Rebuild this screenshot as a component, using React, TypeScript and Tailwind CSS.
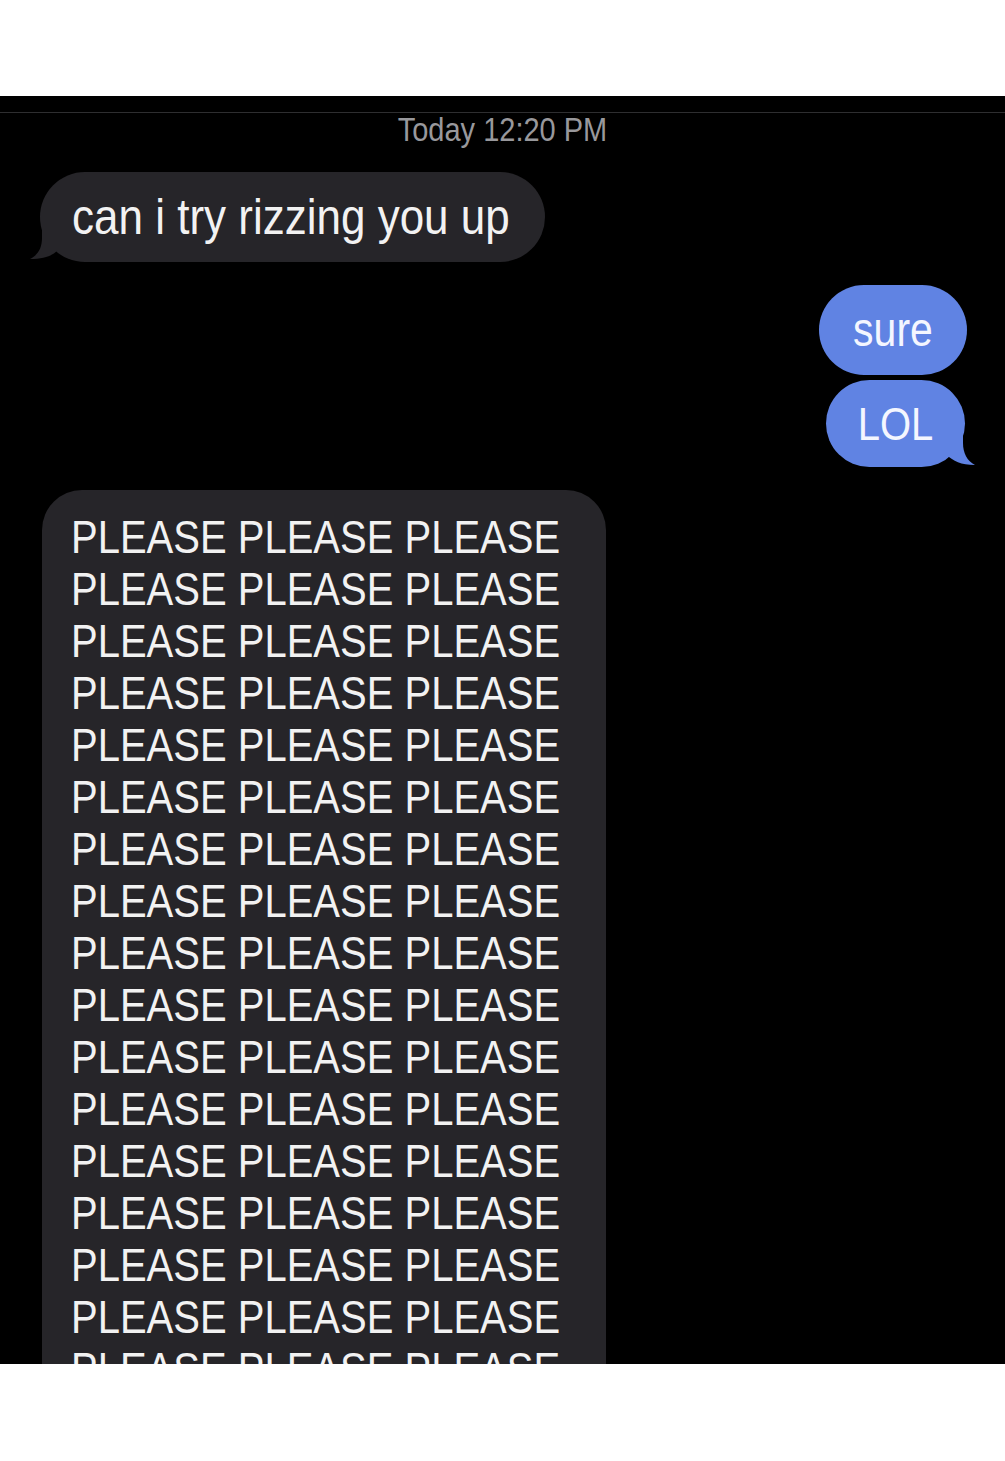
const font = { fontFamily: '"Liberation Sans", Arial, sans-serif' };

const pleaseLines = Array.from({ length: 17 }, () => 'PLEASE PLEASE PLEASE');

function TailLeft({ color }: { color: string }) {
  return (
    <svg
      className="absolute -left-[12px] bottom-0"
      width="34"
      height="34"
      viewBox="0 0 34 34"
    >
      <path d="M14 0 L30 0 L30 22 C24 28 16 31 2 31 C10 27 14 20 14 10 Z" fill={color} />
    </svg>
  );
}

function TailRight({ color }: { color: string }) {
  return (
    <svg
      className="absolute -right-[12px] bottom-0"
      width="34"
      height="34"
      viewBox="0 0 34 34"
    >
      <path d="M20 0 L4 0 L4 22 C10 28 18 32 32 32 C24 28 20 20 20 10 Z" fill={color} />
    </svg>
  );
}

export default function App() {
  return (
    <div className="w-[1005px] h-[1461px] bg-white flex flex-col" style={font}>
      <div className="h-[96px] shrink-0 bg-white" />

      <div className="h-[1268px] shrink-0 bg-black overflow-hidden flex flex-col">
        <div className="h-[16px] shrink-0" />
        <div className="h-px shrink-0 bg-[#2e2e30]" />

        {/* timestamp */}
        <div className="h-[36px] flex items-center justify-center text-[29px] text-[#98989c]">
          <span className="inline-block scale-y-[1.12]">Today 12:20 PM</span>
        </div>

        {/* incoming */}
        <div className="mt-[23px] pl-[40px]">
          <div className="relative w-[505px] h-[90px] rounded-full bg-[#262529] flex items-center pl-[32px] text-[44px] text-[#f2f2f2]">
            <TailLeft color="#262529" />
            <span className="relative inline-block scale-y-[1.15]">can i try rizzing you up</span>
          </div>
        </div>

        {/* outgoing */}
        <div className="mt-[23px] flex flex-col items-end gap-[5px] pr-[38px]">
          <div className="w-[148px] h-[90px] rounded-full bg-[#6083e3] flex items-center justify-center text-[41px] text-[#f4f6ff]">
            <span className="inline-block scale-y-[1.15] mt-[2px]">sure</span>
          </div>
          <div className="relative mr-[2px] w-[139px] h-[87px] rounded-full bg-[#6083e3] flex items-center justify-center text-[40px] text-[#f4f6ff]">
            <TailRight color="#6083e3" />
            <span className="relative inline-block scale-y-[1.15]">LOL</span>
          </div>
        </div>

        {/* long incoming, runs past the bottom of the thread */}
        <div className="mt-[23px] pl-[42px]">
          <div className="w-[564px] rounded-t-[40px] bg-[#262529] pt-[21px] pl-[29px] text-[40px] text-[#f2f2f2]">
            {pleaseLines.map((line, i) => (
              <div key={i} className="h-[52px] leading-[52px] whitespace-nowrap">
                <span className="inline-block scale-y-[1.15]">{line}</span>
              </div>
            ))}
          </div>
        </div>
      </div>

      <div className="flex-1 bg-white" />
    </div>
  );
}
